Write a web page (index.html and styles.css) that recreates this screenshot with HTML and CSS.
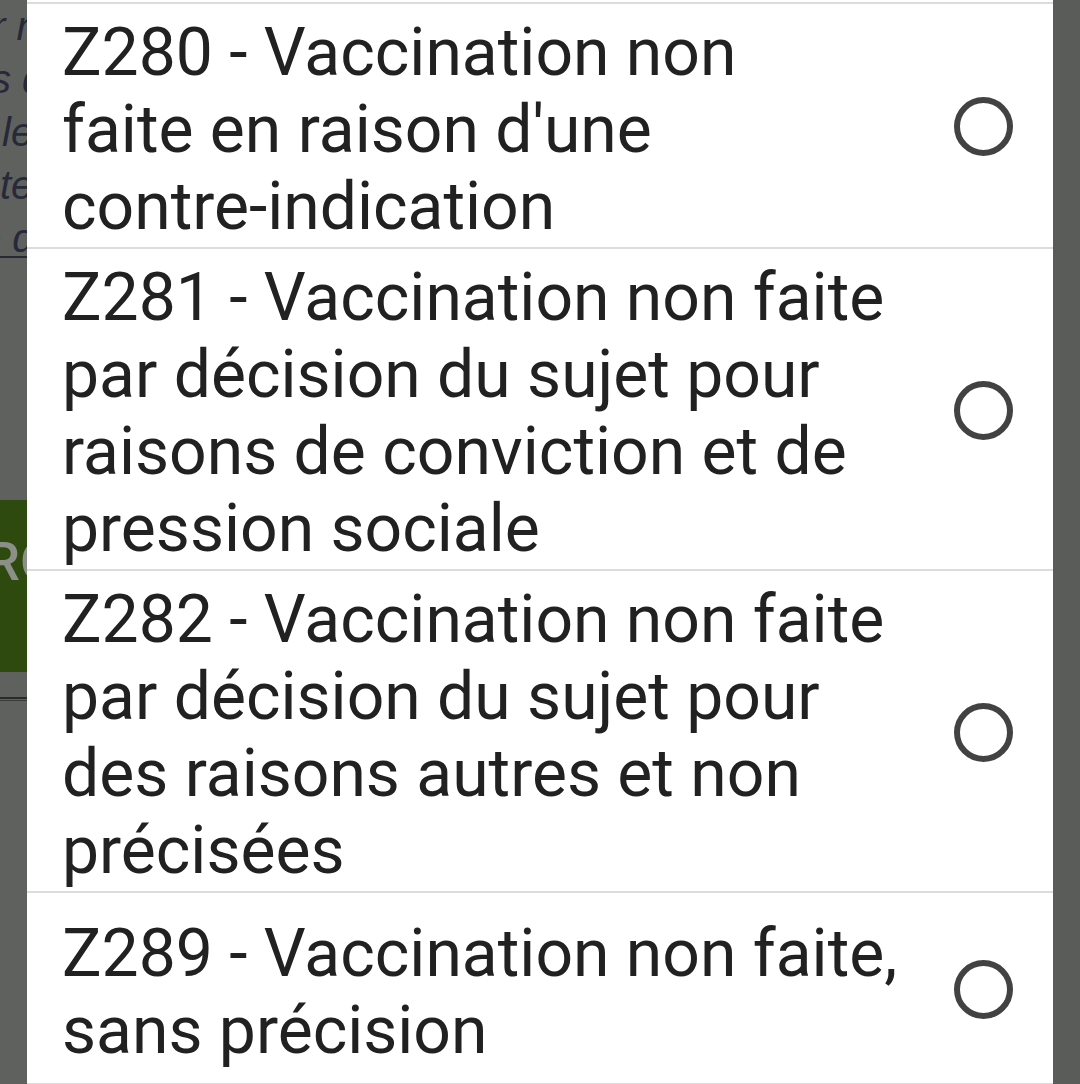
FILE: index.html
```html
<!DOCTYPE html>
<html lang="fr">
  <head>
    <meta charset="UTF-8" />
    <meta name="viewport" content="width=device-width, initial-scale=1.0" />
    <title>Motif de non-vaccination</title>
    <link rel="stylesheet" href="styles.css">
  </head>
  <body>
    <div class="screen">
      <!-- page behind the dialog, dimmed -->
      <div class="backdrop">
        <div class="bg-text">
          <p>r ne</p>
          <p>s de</p>
          <p>les</p>
          <p>tes</p>
          <p class="bg-link">e de</p>
        </div>
        <div class="bg-button">RO</div>
        <div class="bg-rule"></div>
      </div>

      <div class="dialog">
        <ul class="options">
          <li class="option">
            <span class="option-label">Z280 - Vaccination non<br>faite en raison d'une<br>contre-indication</span>
            <span class="radio"></span>
          </li>
          <li class="option">
            <span class="option-label">Z281 - Vaccination non faite<br>par décision du sujet pour<br>raisons de conviction et de<br>pression sociale</span>
            <span class="radio"></span>
          </li>
          <li class="option">
            <span class="option-label">Z282 - Vaccination non faite<br>par décision du sujet pour<br>des raisons autres et non<br>précisées</span>
            <span class="radio"></span>
          </li>
          <li class="option">
            <span class="option-label">Z289 - Vaccination non faite,<br>sans précision</span>
            <span class="radio"></span>
          </li>
        </ul>
      </div>

      <div class="backdrop backdrop-right"></div>
    </div>
  </body>
</html>
```

FILE: styles.css
```css
* {
  margin: 0;
  padding: 0;
  box-sizing: border-box;
}

html,
body {
  height: 100%;
  overflow: hidden;
}

body {
  font-family: Roboto, "Noto Sans", sans-serif;
  background: #5e605e;
}

.screen {
  display: grid;
  grid-template-columns: 27px 1026px 27px;
  height: 1084px;
}

.backdrop {
  background: #5f615f;
  overflow: hidden;
  display: flex;
  flex-direction: column;
}

.backdrop-right {
  background: #5a5c5a;
}

.bg-text p {
  font-family: "Liberation Sans", Arial, sans-serif;
  font-style: italic;
  font-size: 40px;
  line-height: 53px;
  color: #272939;
  white-space: nowrap;
}

.bg-text p:nth-child(1) { text-indent: -8px; }
.bg-text p:nth-child(2) { text-indent: -9px; }
.bg-text p:nth-child(3) { text-indent: 2px; }
.bg-text p:nth-child(4) { text-indent: 0; }
.bg-text p:nth-child(5) { text-indent: -21px; }

.bg-link {
  text-decoration: underline;
  text-decoration-thickness: 2px;
  text-underline-offset: 4px;
}

.bg-button {
  margin-top: 235px;
  height: 172px;
  background: #2f4a0e;
  color: #8b8f87;
  font-size: 54px;
  font-weight: 500;
  line-height: 124px;
  white-space: nowrap;
  text-indent: -14px;
}

.bg-rule {
  margin-top: 25px;
  height: 4px;
  border-top: 2px solid #2a2a2a;
  border-bottom: 1px solid #3a3a3a;
}

.dialog {
  background: #fff;
  overflow: hidden;
}

.options {
  list-style: none;
  border-top: 2px solid #dcdcdc;
  margin-top: 2px;
}

.option {
  display: flex;
  align-items: center;
  min-height: 192px;
  padding: 10px 40px 2px 35px;
  border-bottom: 2px solid #dcdcdc;
}

.option-label {
  flex: 1;
  font-size: 66px;
  line-height: 77px;
  color: #212121;
}

.radio {
  width: 59px;
  height: 59px;
  border: 6px solid #424242;
  border-radius: 50%;
  flex-shrink: 0;
  margin-top: -6px;
}
```
